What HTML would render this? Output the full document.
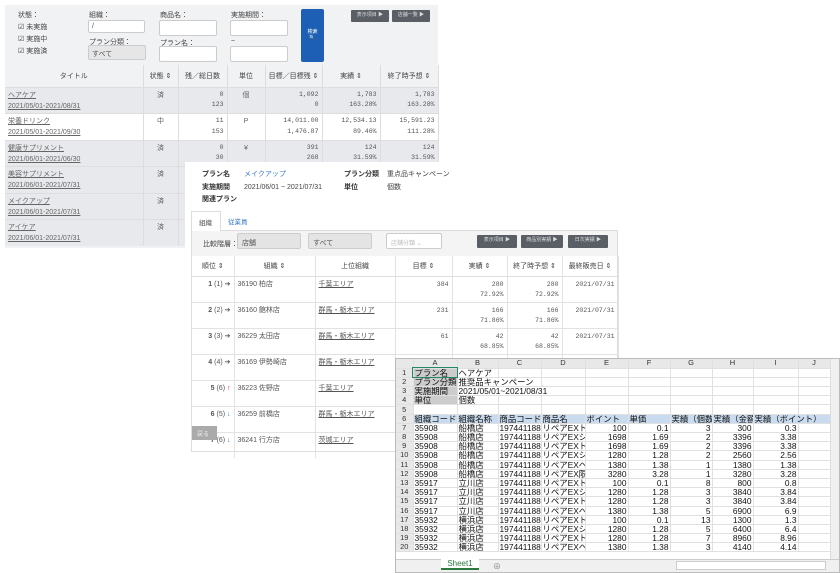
<!DOCTYPE html><html><head><meta charset="utf-8"><style>
*{box-sizing:border-box;margin:0;padding:0}
body{width:840px;height:573px;background:#fff;position:relative;overflow:hidden;font-family:"Liberation Sans","Noto Sans CJK JP",sans-serif;font-size:7px;color:#555}
.a{position:absolute}
.p1{left:5px;top:5px;width:433px;height:243px;background:#f1f2f4}
table{border-collapse:collapse;table-layout:fixed;position:absolute}
td,th{overflow:hidden;white-space:nowrap}
.t1 th{height:22px;font-weight:normal;color:#444;background:#f1f2f4;border-right:1px solid #ddd}
.t1 tr.d{height:26.5px}
.t1 td{height:26.5px;vertical-align:top;padding:2px 3px 0;border-right:1px solid #ddd;border-top:1px solid #ddd;font-family:"Liberation Mono","Noto Sans CJK JP",monospace;font-size:6.5px;text-align:right;line-height:10.5px}
.t1 td.l{text-align:left;font-family:"Liberation Sans","Noto Sans CJK JP",sans-serif;font-size:7px;line-height:11px;text-decoration:underline;color:#666}
.g td{background:#e7e9ec}
.inp{position:absolute;background:#fff;border:1px solid #ccc;border-radius:2px}
.btn{position:absolute;background:#5a5f66;color:#ddd;font-size:5px;text-align:center;line-height:11px;border-radius:1px}
.t2 th{height:20px;font-weight:normal;color:#444;border-right:1px solid #e2e2e2;border-bottom:1px solid #ddd}
.t2 td{height:26px;vertical-align:top;padding:3px 3px 0;border-right:1px solid #e2e2e2;border-top:1px solid #e2e2e2;font-family:"Liberation Mono",monospace;font-size:6.5px;text-align:right;line-height:10px}
.t2 td.s{font-family:"Liberation Sans","Noto Sans CJK JP",sans-serif;font-size:7px;text-align:left}
.u{text-decoration:underline}
.xl{left:395px;top:358px;width:445px;height:215px;background:#fff;border:1px solid #bbb}
.t3{font-size:8.4px;color:#111;font-family:"Liberation Sans","Noto Sans CJK JP",sans-serif}
.t3 tr{height:9.2px}
.t3 td{height:9.2px;line-height:8px;border-right:1px solid #e0e0e0;border-bottom:1px solid #e0e0e0;padding:0 1px}
.t3 td.n{background:#e8e8e8;color:#333;text-align:center;font-size:7.5px}
.t3 td.r{text-align:right}
.h6 td{background:#c9dbef}
.h6 td.n{background:#e8e8e8}
</style></head><body>
<div class="a p1"></div>
<div class="a" style="left:18px;top:10px;line-height:12px;color:#444">状態：<br>☑ 未実施<br>☑ 実施中<br>☑ 実施済</div>
<div class="a" style="left:89px;top:10px;color:#444">組織：</div>
<div class="inp" style="left:88px;top:20px;width:57px;height:13px;padding:2px 3px">/</div>
<div class="a" style="left:89px;top:37px;color:#444">プラン分類：</div>
<div class="inp" style="left:88px;top:45px;width:58px;height:15px;background:#e6e6e6;padding:3px 3px">すべて</div>
<div class="a" style="left:160px;top:10px;color:#444">商品名：</div>
<div class="inp" style="left:159px;top:20px;width:58px;height:16px"></div>
<div class="a" style="left:160px;top:38px;color:#444">プラン名：</div>
<div class="inp" style="left:159px;top:46px;width:58px;height:16px"></div>
<div class="a" style="left:231px;top:10px;color:#444">実施期間：</div>
<div class="inp" style="left:230px;top:20px;width:58px;height:16px"></div>
<div class="a" style="left:231px;top:38px;color:#444">~</div>
<div class="inp" style="left:230px;top:46px;width:58px;height:16px"></div>
<div class="a" style="left:301px;top:9px;width:23px;height:53px;background:#1d5fb4;border-radius:2px;color:#fff;font-size:5px;text-align:center;padding-top:19px">検索<br>🔍</div>
<div class="btn" style="left:351px;top:10px;width:38px;height:12px">表示項目 ▶</div>
<div class="btn" style="left:392px;top:10px;width:38px;height:12px">店舗一覧 ▶</div>
<table class="t1" style="left:5px;top:65px;width:433px">
<colgroup><col style="width:138px"><col style="width:35px"><col style="width:49px"><col style="width:38px"><col style="width:57px"><col style="width:58px"><col style="width:58px"></colgroup>
<tr><th>タイトル</th><th>状態 ⇕</th><th>残／総日数</th><th>単位</th><th>目標／目標残 ⇕</th><th>実績 ⇕</th><th>終了時予想 ⇕</th></tr>
<tr class="g d"><td class="l">ヘアケア<br>2021/05/01-2021/08/31</td><td class="l" style="text-decoration:none;text-align:center">済</td><td>0<br>123</td><td class="l" style="text-decoration:none;text-align:center">個</td><td>1,092<br>0</td><td>1,783<br>163.28%</td><td>1,783<br>163.28%</td></tr>
<tr class="d" style="background:#fff"><td class="l">栄養ドリンク<br>2021/05/01-2021/09/30</td><td class="l" style="text-decoration:none;text-align:center">中</td><td>11<br>153</td><td class="l" style="text-decoration:none;text-align:center">P</td><td>14,011.00<br>1,476.87</td><td>12,534.13<br>89.46%</td><td>15,591.23<br>111.28%</td></tr>
<tr class="g d"><td class="l">健康サプリメント<br>2021/06/01-2021/06/30</td><td class="l" style="text-decoration:none;text-align:center">済</td><td>0<br>30</td><td class="l" style="text-decoration:none;text-align:center">¥</td><td>391<br>268</td><td>124<br>31.59%</td><td>124<br>31.59%</td></tr>
<tr class="g d"><td class="l">美容サプリメント<br>2021/06/01-2021/07/31</td><td class="l" style="text-decoration:none;text-align:center">済</td><td></td><td></td><td></td><td></td><td></td></tr>
<tr class="g d"><td class="l">メイクアップ<br>2021/06/01-2021/07/31</td><td class="l" style="text-decoration:none;text-align:center">済</td><td></td><td></td><td></td><td></td><td></td></tr>
<tr class="g d"><td class="l">アイケア<br>2021/06/01-2021/07/31</td><td class="l" style="text-decoration:none;text-align:center">済</td><td></td><td></td><td></td><td></td><td></td></tr>
</table>
<div class="a" style="left:185px;top:162px;width:436px;height:292px;background:#fff"></div>
<div class="a" style="left:202px;top:169px;line-height:12.5px;font-weight:bold;color:#333">プラン名<br>実施期間<br>関連プラン</div>
<div class="a" style="left:244px;top:169px;line-height:12.5px;color:#444"><span style="color:#3a7bc8">メイクアップ</span><br>2021/06/01 ~ 2021/07/31</div>
<div class="a" style="left:344px;top:169px;line-height:12.5px;font-weight:bold;color:#333">プラン分類<br>単位</div>
<div class="a" style="left:387px;top:169px;line-height:12.5px;color:#444">重点品キャンペーン<br>個数</div>
<div class="a" style="left:191px;top:211px;width:30px;height:20px;border:1px solid #ddd;border-bottom:none;background:#fff;padding:5px 7px;font-size:6.5px;z-index:2">組織</div>
<div class="a" style="left:228px;top:216px;color:#3a7bc8;font-size:6.5px">従業員</div>
<div class="a" style="left:191px;top:230px;width:427px;height:222px;border:1px solid #ddd"></div>
<div class="a" style="left:192px;top:231px;width:425px;height:25px;background:#f4f4f4"></div>
<div class="a" style="left:203px;top:239px;color:#444">比較階層：</div>
<div class="inp" style="left:237px;top:233px;width:64px;height:16px;background:#e4e4e4;padding:4px">店舗</div>
<div class="inp" style="left:308px;top:233px;width:64px;height:16px;background:#e4e4e4;padding:4px">すべて</div>
<div class="inp" style="left:386px;top:233px;width:56px;height:16px;color:#bbb;padding:4px;font-size:6px">店舗分類 ⌄</div>
<div class="btn" style="left:477px;top:235px;width:40px;height:13px">表示項目 ▶</div>
<div class="btn" style="left:521px;top:235px;width:42px;height:13px">商品別実績 ▶</div>
<div class="btn" style="left:568px;top:235px;width:40px;height:13px">日次実績 ▶</div>
<table class="t2" style="left:192px;top:256px;width:426px">
<colgroup><col style="width:42px"><col style="width:81px"><col style="width:80px"><col style="width:57px"><col style="width:55px"><col style="width:55px"><col style="width:56px"></colgroup>
<tr><th>順位 ⇕</th><th>組織 ⇕</th><th>上位組織</th><th>目標 ⇕</th><th>実績 ⇕</th><th>終了時予想 ⇕</th><th>最終販売日 ⇕</th></tr>
<tr><td class="s" style="text-align:right"><b>1</b> (1) ➔</td><td class="s">36190 柏店</td><td class="s u">千葉エリア</td><td>384</td><td>280<br>72.92%</td><td>280<br>72.92%</td><td>2021/07/31</td></tr>
<tr><td class="s" style="text-align:right"><b>2</b> (2) ➔</td><td class="s">36160 館林店</td><td class="s u">群馬・栃木エリア</td><td>231</td><td>166<br>71.86%</td><td>166<br>71.86%</td><td>2021/07/31</td></tr>
<tr><td class="s" style="text-align:right"><b>3</b> (3) ➔</td><td class="s">36229 太田店</td><td class="s u">群馬・栃木エリア</td><td>61</td><td>42<br>68.85%</td><td>42<br>68.85%</td><td>2021/07/31</td></tr>
<tr><td class="s" style="text-align:right"><b>4</b> (4) ➔</td><td class="s">36169 伊勢崎店</td><td class="s u">群馬・栃木エリア</td><td></td><td></td><td></td><td></td></tr>
<tr><td class="s" style="text-align:right"><b>5</b> (6) <span style="color:#c33">↑</span></td><td class="s">36223 佐野店</td><td class="s u">千葉エリア</td><td></td><td></td><td></td><td></td></tr>
<tr><td class="s" style="text-align:right"><b>6</b> (5) <span style="color:#38c">↓</span></td><td class="s">36259 前橋店</td><td class="s u">群馬・栃木エリア</td><td></td><td></td><td></td><td></td></tr>
<tr><td class="s" style="text-align:right"><b>7</b> (6) <span style="color:#38c">↓</span></td><td class="s">36241 行方店</td><td class="s u">茨城エリア</td><td></td><td></td><td></td><td></td></tr>
</table>
<div class="a" style="left:192px;top:426px;width:25px;height:14px;background:#aaa;color:#eee;font-size:6px;padding:3px 5px">戻る</div>
<div class="a xl"></div>
<table class="t3" style="left:396px;top:359px;width:434px">
<colgroup><col style="width:17px"><col style="width:44px"><col style="width:41px"><col style="width:43px"><col style="width:44px"><col style="width:43px"><col style="width:42px"><col style="width:42px"><col style="width:41px"><col style="width:45px"><col style="width:32px"></colgroup>
<tr><td class="n"></td><td class="n">A</td><td class="n">B</td><td class="n">C</td><td class="n">D</td><td class="n">E</td><td class="n">F</td><td class="n">G</td><td class="n">H</td><td class="n">I</td><td class="n">J</td></tr>
<tr><td class="n">1</td><td style="background:#ccc;outline:1px solid #286">プラン名</td><td>ヘアケア</td><td></td><td></td><td></td><td></td><td></td><td></td><td></td><td></td></tr>
<tr><td class="n">2</td><td style="background:#ccc">プラン分類</td><td colspan="2">推奨品キャンペーン</td><td></td><td></td><td></td><td></td><td></td><td></td><td></td></tr>
<tr><td class="n">3</td><td style="background:#ccc">実施期間</td><td colspan="3">2021/05/01~2021/08/31</td><td></td><td></td><td></td><td></td><td></td><td></td></tr>
<tr><td class="n">4</td><td style="background:#ccc">単位</td><td>個数</td><td></td><td></td><td></td><td></td><td></td><td></td><td></td><td></td></tr>
<tr><td class="n">5</td><td></td><td></td><td></td><td></td><td></td><td></td><td></td><td></td><td></td><td></td></tr>
<tr class="h6"><td class="n">6</td><td>組織コード</td><td>組織名称</td><td>商品コード</td><td>商品名</td><td>ポイント</td><td>単価</td><td>実績（個数</td><td>実績（金額</td><td colspan="2">実績（ポイント）</td></tr>
<tr><td class="n">7</td><td>35908</td><td>船橋店</td><td>197441188</td><td>リペアEXト</td><td class="r">100</td><td class="r">0.1</td><td class="r">3</td><td class="r">300</td><td class="r">0.3</td><td></td></tr>
<tr><td class="n">8</td><td>35908</td><td>船橋店</td><td>197441188</td><td>リペアEXシ</td><td class="r">1698</td><td class="r">1.69</td><td class="r">2</td><td class="r">3396</td><td class="r">3.38</td><td></td></tr>
<tr><td class="n">9</td><td>35908</td><td>船橋店</td><td>197441188</td><td>リペアEXト</td><td class="r">1698</td><td class="r">1.69</td><td class="r">2</td><td class="r">3396</td><td class="r">3.38</td><td></td></tr>
<tr><td class="n">10</td><td>35908</td><td>船橋店</td><td>197441188</td><td>リペアEXシ</td><td class="r">1280</td><td class="r">1.28</td><td class="r">2</td><td class="r">2560</td><td class="r">2.56</td><td></td></tr>
<tr><td class="n">11</td><td>35908</td><td>船橋店</td><td>197441188</td><td>リペアEXヘ</td><td class="r">1380</td><td class="r">1.38</td><td class="r">1</td><td class="r">1380</td><td class="r">1.38</td><td></td></tr>
<tr><td class="n">12</td><td>35908</td><td>船橋店</td><td>197441188</td><td>リペアEX限</td><td class="r">3280</td><td class="r">3.28</td><td class="r">1</td><td class="r">3280</td><td class="r">3.28</td><td></td></tr>
<tr><td class="n">13</td><td>35917</td><td>立川店</td><td>197441188</td><td>リペアEXト</td><td class="r">100</td><td class="r">0.1</td><td class="r">8</td><td class="r">800</td><td class="r">0.8</td><td></td></tr>
<tr><td class="n">14</td><td>35917</td><td>立川店</td><td>197441188</td><td>リペアEXシ</td><td class="r">1280</td><td class="r">1.28</td><td class="r">3</td><td class="r">3840</td><td class="r">3.84</td><td></td></tr>
<tr><td class="n">15</td><td>35917</td><td>立川店</td><td>197441188</td><td>リペアEXト</td><td class="r">1280</td><td class="r">1.28</td><td class="r">3</td><td class="r">3840</td><td class="r">3.84</td><td></td></tr>
<tr><td class="n">16</td><td>35917</td><td>立川店</td><td>197441188</td><td>リペアEXヘ</td><td class="r">1380</td><td class="r">1.38</td><td class="r">5</td><td class="r">6900</td><td class="r">6.9</td><td></td></tr>
<tr><td class="n">17</td><td>35932</td><td>横浜店</td><td>197441188</td><td>リペアEXト</td><td class="r">100</td><td class="r">0.1</td><td class="r">13</td><td class="r">1300</td><td class="r">1.3</td><td></td></tr>
<tr><td class="n">18</td><td>35932</td><td>横浜店</td><td>197441188</td><td>リペアEXシ</td><td class="r">1280</td><td class="r">1.28</td><td class="r">5</td><td class="r">6400</td><td class="r">6.4</td><td></td></tr>
<tr><td class="n">19</td><td>35932</td><td>横浜店</td><td>197441188</td><td>リペアEXト</td><td class="r">1280</td><td class="r">1.28</td><td class="r">7</td><td class="r">8960</td><td class="r">8.96</td><td></td></tr>
<tr><td class="n">20</td><td>35932</td><td>横浜店</td><td>197441188</td><td>リペアEXヘ</td><td class="r">1380</td><td class="r">1.38</td><td class="r">3</td><td class="r">4140</td><td class="r">4.14</td><td></td></tr>
</table>
<div class="a" style="left:830px;top:359px;width:9px;height:200px;background:#f0f0f0;border-left:1px solid #ddd"></div>
<div class="a" style="left:396px;top:559px;width:443px;height:13px;background:#f0f0f0;border-top:1px solid #ccc"></div>
<div class="a" style="left:441px;top:559px;width:38px;height:11px;background:#fff;border-bottom:2px solid #2a7a3f;color:#2a7a3f;font-size:8px;text-align:center;line-height:10px">Sheet1</div>
<div class="a" style="left:493px;top:561px;color:#888;font-size:8px">⊕</div>
<div class="a" style="left:676px;top:561px;width:150px;height:9px;background:#fff;border:1px solid #ccc"></div>
</body></html>
